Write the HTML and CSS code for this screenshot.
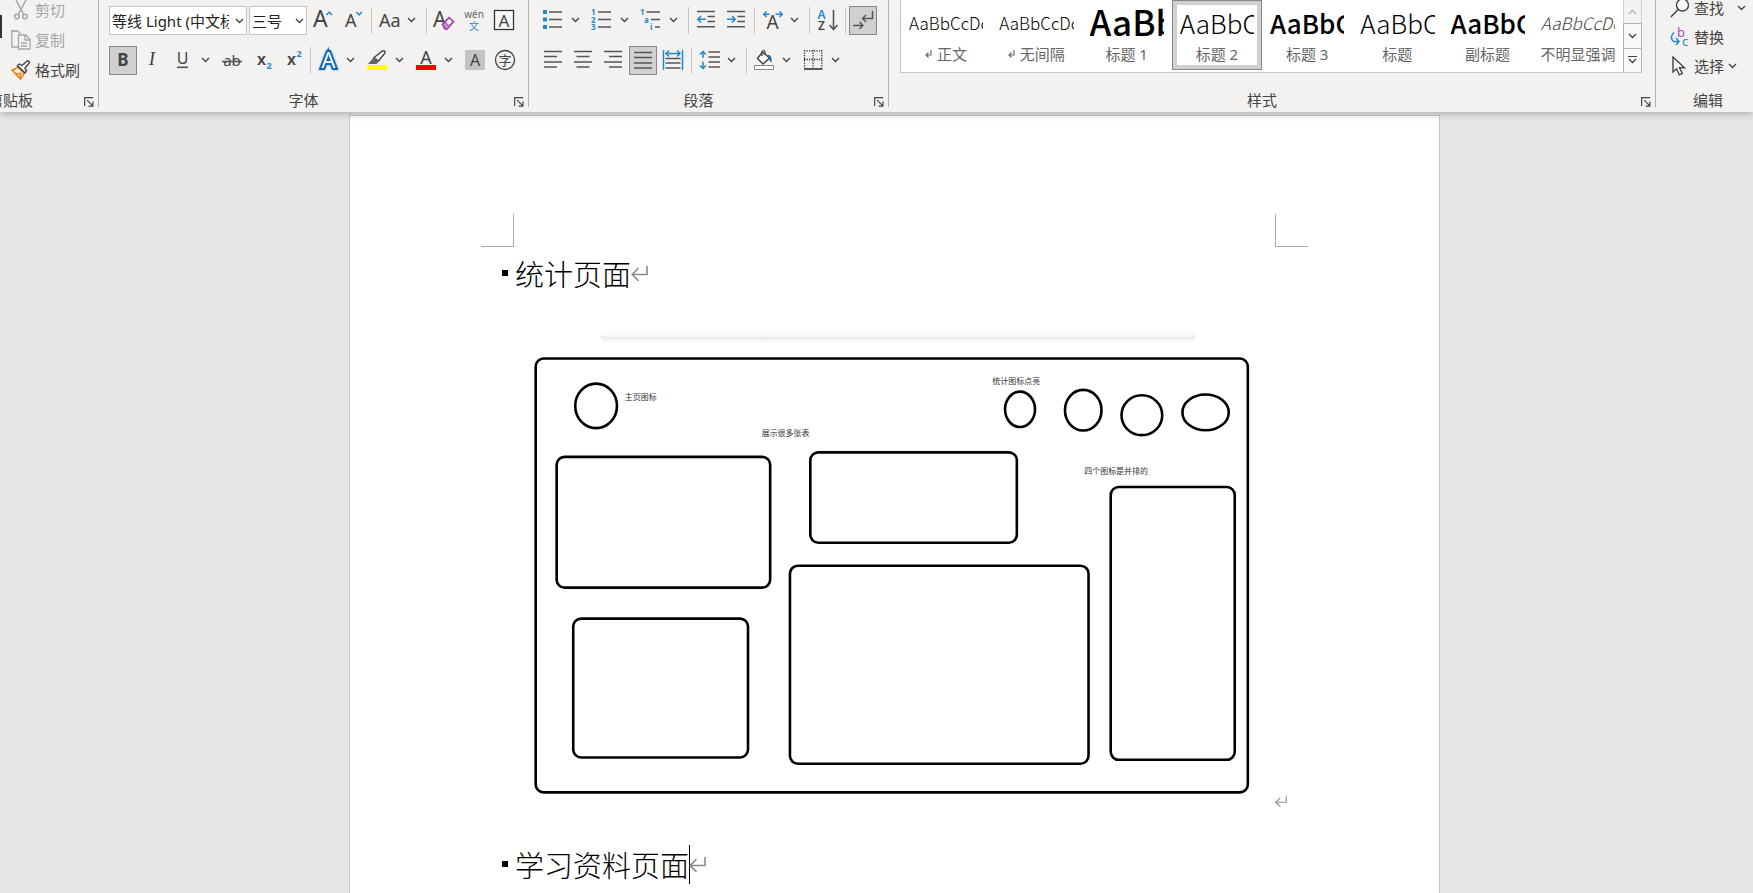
FILE: index.html
```html
<!DOCTYPE html>
<html lang="zh-CN">
<head>
<meta charset="utf-8">
<title>统计页面</title>
<link rel="stylesheet" href="styles.css">
</head>
<body>
<svg class="defs" aria-hidden="true">
  <symbol id="chev" viewBox="0 0 9 6"><path d="M1 1l3.500 3.500L8 1" fill="none" stroke="currentColor" stroke-width="1.400"/></symbol>
  <symbol id="launch" viewBox="0 0 11 11"><path d="M.7 10V.7H10M3.500 3.500l6 6M9.800 5v5H5" fill="none" stroke="#444" stroke-width="1.300"/></symbol>
  <symbol id="ret" viewBox="0 0 17 15"><path d="M16 0v8.500H1.500M7.500 2L1.200 8.500l6.300 6.300" fill="none" stroke="currentColor" stroke-width="1.600"/></symbol>
  <symbol id="mini" viewBox="0 0 7 8"><path d="M6 0v5H1M3.500 2.500L1 5l2.500 2.500" fill="none" stroke="currentColor" stroke-width="1.100"/></symbol>
</svg>

<header class="ribbon">
  <section class="group clipboard">
    <div class="group-body">
      <button class="paste" aria-label="粘贴"></button>
      <div class="commands">
        <button class="command" disabled>
          <svg class="cmd-icon" viewBox="0 0 20 20"><g fill="none" stroke="#a6a6a6" stroke-width="1.500"><path d="M5 0l7.500 14M15 0L7.500 14"/><circle cx="6" cy="16.500" r="2.300"/><circle cx="14" cy="16.500" r="2.300"/></g></svg>剪切</button>
        <button class="command" disabled>
          <svg class="cmd-icon" viewBox="0 0 20 20"><g fill="#f3f2f1" stroke="#a6a6a6" stroke-width="1.300"><path d="M7 1H.8v16H7"/><path d="M.8 1h6l3 3"/><path d="M7.500 5h7l4.500 4.500V19H7.500z"/><path d="M14 5v5h5M10 13h6M10 16h6" fill="none"/></g></svg>复制</button>
        <button class="command">
          <svg class="cmd-icon" viewBox="0 0 20 20"><path d="M1 10q3.500-.5 5.500-3l6.500 6q-.5 3-3.500 6z" fill="#fdf3e6" stroke="#e07b10" stroke-width="1.500"/><path d="M4.500 13.500l6-.5-1.500 5z" fill="#f3b467" stroke="#e07b10"/><path d="M6.500 5.500l2-1.500 2.500 1.500L16.500.8q2 .2 2 2L13.800 8.500l1.700 2-1.500 2.500z" fill="#fafafa" stroke="#444" stroke-width="1.400"/></svg>格式刷</button>
      </div>
    </div>
    <div class="group-foot"><span>剪贴板</span><button class="launcher" aria-label="剪贴板选项"><svg><use href="#launch"/></svg></button></div>
  </section>

  <section class="group font">
    <div class="group-body">
      <div class="row">
        <div class="combo combo-font"><select aria-label="字体"><option>等线 Light (中文标题)</option></select><svg class="chev"><use href="#chev"/></svg></div>
        <div class="combo combo-size"><select aria-label="字号"><option>三号</option></select><svg class="chev"><use href="#chev"/></svg></div>
        <button class="tool" aria-label="增大字号"><svg viewBox="0 0 30 30"><text x="5" y="22" font-size="23">A</text><path class="blue-line" d="M18.500 10l2.700-3 2.700 3"/></svg></button>
        <button class="tool" aria-label="减小字号"><svg viewBox="0 0 30 30"><text x="7" y="22" font-size="18">A</text><path class="blue-line" d="M18.500 7l2.700 3 2.700-3"/></svg></button>
        <i class="sep"></i>
        <button class="tool split" aria-label="更改大小写"><svg viewBox="0 0 30 30"><text x="5" y="22" font-size="18">Aa</text></svg><span class="drop"><svg class="chev"><use href="#chev"/></svg></span></button>
        <i class="sep"></i>
        <button class="tool" aria-label="清除所有格式"><svg viewBox="0 0 30 30"><text x="4" y="22" font-size="21">A</text><path d="M13.500 19.500l6.500-7 4.500 4-6.500 7.500h-2z" fill="#f3f2f1" stroke="#9a35a8" stroke-width="1.600"/><path d="M16 17l5 4.500-3.200 3-4.500-4.500z" fill="#c48ccc" stroke="#9a35a8"/></svg></button>
        <button class="tool" aria-label="拼音指南"><svg viewBox="0 0 30 30"><text x="15" y="13" font-size="10" text-anchor="middle" class="t-gray">wén</text><text x="15" y="25" font-size="10" text-anchor="middle" class="t-blue">文</text></svg></button>
        <button class="tool" aria-label="字符边框"><svg viewBox="0 0 30 30"><rect x="5.500" y="5.500" width="19" height="19" fill="#fafafa" stroke="#333" stroke-width="1.300"/><text x="15" y="21.500" font-size="17" text-anchor="middle">A</text></svg></button>
      </div>
      <div class="row">
        <button class="tool on" aria-label="加粗" aria-pressed="true"><svg viewBox="0 0 30 30"><text x="15" y="20" font-size="17" font-weight="700" text-anchor="middle">B</text></svg></button>
        <button class="tool" aria-label="倾斜"><svg viewBox="0 0 30 30"><text x="14" y="20" font-size="19" class="t-serif" text-anchor="middle">I</text></svg></button>
        <button class="tool split" aria-label="下划线"><svg viewBox="0 0 30 30"><text x="14.500" y="19" font-size="16" text-anchor="middle">U</text><path class="line" d="M9 22.300h11"/></svg><span class="drop"><svg class="chev"><use href="#chev"/></svg></span></button>
        <button class="tool" aria-label="删除线"><svg viewBox="0 0 30 30"><text x="15" y="20.500" font-size="15" text-anchor="middle">ab</text><path class="line" d="M5 16.500h20"/></svg></button>
        <button class="tool" aria-label="下标"><svg viewBox="0 0 30 30"><text x="10" y="19.500" font-size="16" font-weight="600">x</text><text x="19.500" y="24" font-size="9" font-weight="700" class="t-blue">2</text></svg></button>
        <button class="tool" aria-label="上标"><svg viewBox="0 0 30 30"><text x="10" y="19.500" font-size="16" font-weight="600">x</text><text x="19.500" y="11.500" font-size="9" font-weight="700" class="t-blue">2</text></svg></button>
        <i class="sep"></i>
        <button class="tool split" aria-label="文本效果"><svg viewBox="0 0 30 30"><text class="fx" x="15.500" y="22.500" font-size="22" text-anchor="middle">A</text></svg><span class="drop"><svg class="chev"><use href="#chev"/></svg></span></button>
        <button class="tool split" aria-label="突出显示颜色"><svg viewBox="0 0 30 30"><path d="M12 12.500l8.500-6.500q3-1 2.500 2L16.500 16z" fill="#fafafa" stroke="#444" stroke-width="1.400"/><path d="M12 12l5 4.500-2.500 2.500L6 19z" fill="#666"/><path d="M5 20h20v5H5z" fill="#ff0"/></svg><span class="drop"><svg class="chev"><use href="#chev"/></svg></span></button>
        <button class="tool split" aria-label="字体颜色"><svg viewBox="0 0 30 30"><text x="15" y="18.500" font-size="18" text-anchor="middle">A</text><path d="M5 20h20v5H5z" fill="red"/></svg><span class="drop"><svg class="chev"><use href="#chev"/></svg></span></button>
        <button class="tool" aria-label="字符底纹"><svg viewBox="0 0 30 30"><path d="M5 5h20v20H5z" fill="#c5c3c1"/><text x="15" y="21" font-size="16" text-anchor="middle">A</text></svg></button>
        <button class="tool" aria-label="带圈字符"><svg viewBox="0 0 30 30"><circle cx="15" cy="15" r="9.500" fill="none" stroke="#444" stroke-width="1.300"/><text x="15" y="20" font-size="13" text-anchor="middle">字</text></svg></button>
      </div>
    </div>
    <div class="group-foot"><span>字体</span><button class="launcher" aria-label="字体选项"><svg><use href="#launch"/></svg></button></div>
  </section>

  <section class="group paragraph">
    <div class="group-body">
      <div class="row">
        <button class="tool split" aria-label="项目符号"><svg viewBox="0 0 30 30"><path d="M5 5h4v4H5zM5 12.500h4v4H5zM5 20h4v4H5z" fill="#1e88d2"/><path class="line" d="M11 7h13M11 14.500h13M11 22h13"/></svg><span class="drop"><svg class="chev"><use href="#chev"/></svg></span></button>
        <button class="tool split" aria-label="编号"><svg viewBox="0 0 30 30"><g font-size="8" font-weight="700"><text class="t-blue" x="4" y="10">1</text><text class="t-blue" x="4" y="17.500">2</text><text class="t-blue" x="4" y="25">3</text></g><path class="line" d="M11 7h13M11 14.500h13M11 22h13"/></svg><span class="drop"><svg class="chev"><use href="#chev"/></svg></span></button>
        <button class="tool split" aria-label="多级列表"><svg viewBox="0 0 30 30"><g font-size="8" font-weight="700"><text class="t-blue" x="4" y="10">1</text><text class="t-blue" x="8" y="17.500">a</text><text class="t-blue" x="14" y="25">i</text></g><path class="line" d="M10.500 7H24M15 14.500h9M19 22h5"/></svg><span class="drop"><svg class="chev"><use href="#chev"/></svg></span></button>
        <i class="sep"></i>
        <button class="tool" aria-label="减少缩进量"><svg viewBox="0 0 30 30"><path class="line" d="M6 6.500h18M16.500 11.500H24M16.500 16.500H24M6 21.800h18"/><path class="blue-line" d="M15 14.200H7M10 11l-3.200 3.200L10 17.400"/></svg></button>
        <button class="tool" aria-label="增加缩进量"><svg viewBox="0 0 30 30"><path class="line" d="M6 6.500h18M16.500 11.500H24M16.500 16.500H24M6 21.800h18"/><path class="blue-line" d="M6 14.200h8M11 11l3.200 3.200-3.200 3.200"/></svg></button>
        <i class="sep"></i>
        <button class="tool split" aria-label="中文版式"><svg viewBox="0 0 30 30"><text x="15.500" y="24" font-size="19" text-anchor="middle">A</text><path class="blue-line" d="M12.500 9.200H7M9.500 6.500L6.800 9.200l2.700 2.700M18.500 9.200H25M22.500 6.500l2.700 2.700-2.700 2.700"/></svg><span class="drop"><svg class="chev"><use href="#chev"/></svg></span></button>
        <i class="sep"></i>
        <button class="tool" aria-label="排序"><svg viewBox="0 0 30 30"><g font-size="12" font-weight="600"><text class="t-blue" x="5.500" y="13.500">A</text><text x="6" y="25">Z</text></g><path class="line" d="M21.500 5v19M17.500 20l4 4.500 4-4.500"/></svg></button>
        <i class="sep"></i>
        <button class="tool on" aria-label="显示编辑标记" aria-pressed="true"><svg viewBox="0 0 30 30"><path class="line thin" d="M24.500 5v7.500h-10M18 9l-3.500 3.500L18 16M5 19.500h10M11.500 16l3.500 3.500-3.500 3.500"/></svg></button>
      </div>
      <div class="row">
        <button class="tool" aria-label="左对齐"><svg viewBox="0 0 30 30"><path class="line" d="M6 6.500h18M6 11.500h13M6 17h18M6 22h13"/></svg></button>
        <button class="tool" aria-label="居中"><svg viewBox="0 0 30 30"><path class="line" d="M6 6.500h18M8.500 11.500h13M6 17h18M8.500 22h13"/></svg></button>
        <button class="tool" aria-label="右对齐"><svg viewBox="0 0 30 30"><path class="line" d="M6 6.500h18M11 11.500h13M6 17h18M11 22h13"/></svg></button>
        <button class="tool on" aria-label="两端对齐" aria-pressed="true"><svg viewBox="0 0 30 30"><path class="line" d="M6 6.500h18M6 11.500h18M6 17h18M6 22h18"/></svg></button>
        <button class="tool" aria-label="分散对齐"><svg viewBox="0 0 30 30"><path class="line" d="M7.500 13.500h15M7.500 18h15M7.500 23h15"/><path class="blue-line" d="M5.500 5v20M24.500 5v20M8 8.500h14M11 5.500l-3 3 3 3M19 5.500l3 3-3 3"/></svg></button>
        <i class="sep"></i>
        <button class="tool split" aria-label="行和段落间距"><svg viewBox="0 0 30 30"><path class="line" d="M14.500 7H26M14.500 12H26M14.500 17H26M14.500 22H26"/><path class="blue-line" d="M9 7v6M9 16.500v6M6 9.500l3-3 3 3M6 20.500l3 3 3-3"/></svg><span class="drop"><svg class="chev"><use href="#chev"/></svg></span></button>
        <i class="sep"></i>
        <button class="tool split" aria-label="底纹"><svg viewBox="0 0 30 30"><path d="M13.500 7l7 6-6.500 6L8.500 13.500z" fill="#fafafa" stroke="#444" stroke-width="1.500"/><path d="M13 11V6.500q1.500-2.500 3 0V10" fill="none" stroke="#444" stroke-width="1.200"/><path d="M18.500 9.500q5 .5 4 8-2-1-2.500-4z" fill="#1b65a8"/><path d="M5.500 20.500h19v4h-19z" fill="#fff" stroke="#8a8886"/></svg><span class="drop"><svg class="chev"><use href="#chev"/></svg></span></button>
        <button class="tool split" aria-label="边框"><svg viewBox="0 0 30 30"><path d="M6 5.800h18M6 14.500h18M6.500 5v18M15 5v18M23.800 5v18" fill="none" stroke="#333" stroke-width="1.300" stroke-dasharray="1.300 1.200"/><path d="M6 24h18.500" stroke="#333" stroke-width="1.600"/></svg><span class="drop"><svg class="chev"><use href="#chev"/></svg></span></button>
      </div>
    </div>
    <div class="group-foot"><span>段落</span><button class="launcher" aria-label="段落选项"><svg><use href="#launch"/></svg></button></div>
  </section>

  <section class="group styles">
    <div class="group-body">
      <div class="gallery">
        <button class="style"><span class="sample s-body">AaBbCcDc</span><span class="style-name"><svg class="mini-ret"><use href="#mini"/></svg>正文</span></button>
        <button class="style"><span class="sample s-body">AaBbCcDc</span><span class="style-name"><svg class="mini-ret"><use href="#mini"/></svg>无间隔</span></button>
        <button class="style"><span class="sample s-h1">AaBb</span><span class="style-name">标题 1</span></button>
        <button class="style chosen" aria-pressed="true"><span class="sample s-title">AaBbC</span><span class="style-name">标题 2</span></button>
        <button class="style"><span class="sample s-title s-bold">AaBbC</span><span class="style-name">标题 3</span></button>
        <button class="style"><span class="sample s-title">AaBbC</span><span class="style-name">标题</span></button>
        <button class="style"><span class="sample s-title s-bold">AaBbC</span><span class="style-name">副标题</span></button>
        <button class="style"><span class="sample s-body s-italic">AaBbCcDc</span><span class="style-name">不明显强调</span></button>
        <div class="scroller">
          <button disabled aria-label="上一行"><svg class="chev up"><use href="#chev"/></svg></button>
          <button aria-label="下一行"><svg class="chev"><use href="#chev"/></svg></button>
          <button class="more" aria-label="其他"><svg class="chev"><use href="#chev"/></svg></button>
        </div>
      </div>
    </div>
    <div class="group-foot"><span>样式</span><button class="launcher" aria-label="样式选项"><svg><use href="#launch"/></svg></button></div>
  </section>

  <section class="group editing">
    <div class="group-body">
      <div class="commands">
        <button class="command"><svg class="cmd-icon" viewBox="0 0 20 20"><circle cx="12.500" cy="7" r="6" fill="#fafafa" stroke="#444" stroke-width="1.400"/><path d="M8.300 11.500L.8 19" stroke="#444" stroke-width="1.500"/></svg><span>查找</span><svg class="chev far"><use href="#chev"/></svg></button>
        <button class="command"><svg class="cmd-icon" viewBox="0 0 20 20"><g font-size="13"><text x="7" y="10" class="t-purple">b</text><text x="12" y="19" class="t-blue">c</text></g><path class="blue-line" d="M4 5.500Q-1 10 3.500 14.500h5M6 11l3 3.500-3 3.500"/></svg><span>替换</span></button>
        <button class="command"><svg class="cmd-icon" viewBox="0 0 20 20"><path d="M3 1v15l3.500-3.200 2.800 6 3-1.400-2.800-5.700h5z" fill="#fafafa" stroke="#444" stroke-width="1.400"/></svg><span>选择</span><svg class="chev"><use href="#chev"/></svg></button>
      </div>
    </div>
    <div class="group-foot"><span>编辑</span></div>
  </section>
</header>

<main class="canvas">
  <article class="page">
    <div class="crops"><i class="crop left"></i><i class="crop right"></i></div>
    <div class="text-area">
      <h2>统计页面<svg class="ret"><use href="#ret"/></svg></h2>
      <figure>
        <svg class="drawing" viewBox="0 0 762 478" role="img" aria-label="统计页面">
          <defs><linearGradient id="fade" x1="0" y1="0" x2="0" y2="1"><stop offset="0" stop-color="#e4e4e4"/><stop offset="1" stop-color="#fff"/></linearGradient></defs>
          <path d="M86 6h597q-3 7-9 7H95q-6 0-9-7z" fill="url(#fade)"/>
          <path d="M86 3h598q-2 4-7 4H93q-5 0-7-4z" fill="#f8f8f8"/>
          <g fill="none" stroke="#000" stroke-width="2.600">
            <rect x="21.700" y="28.500" width="713.100" height="434.500" rx="8"/>
            <rect x="42.700" y="127" width="213.800" height="131" rx="8"/>
            <rect x="296.700" y="122.500" width="206.800" height="90.500" rx="8"/>
            <rect x="59.300" y="289" width="175" height="139" rx="8"/>
            <rect x="276.300" y="236" width="299" height="198.300" rx="8"/>
            <rect x="597.500" y="157.200" width="124.200" height="273.200" rx="8"/>
            <ellipse cx="82.200" cy="76" rx="20.900" ry="22.300"/>
            <ellipse cx="506.700" cy="79.400" rx="15" ry="17.700"/>
            <ellipse cx="570" cy="80.300" rx="18.300" ry="20.300"/>
            <ellipse cx="628.700" cy="85.300" rx="20.400" ry="20"/>
            <ellipse cx="692.500" cy="82.500" rx="23.200" ry="17.900"/>
          </g>
          <g class="notes">
            <text x="111" y="70">主页图标</text>
            <text x="479" y="54">统计图标点亮</text>
            <text x="248" y="106">展示很多张表</text>
            <text x="571" y="144">四个图标是并排的</text>
          </g>
        </svg>
        <svg class="ret small"><use href="#ret"/></svg>
      </figure>
      <h2>学习资料页面<i class="caret"></i><svg class="ret"><use href="#ret"/></svg></h2>
    </div>
  </article>
</main>
</body>
</html>
```
FILE: styles.css
```css
* { box-sizing: border-box; }

body {
  margin: 0;
  height: 100vh;
  display: flex;
  flex-direction: column;
  overflow: hidden;
  background: #e6e6e6;
  color: #444;
  font: 15px/20px "Noto Sans", "Noto Sans CJK SC", sans-serif;
}

button {
  border: 0;
  padding: 0;
  background: none;
  color: inherit;
  font: inherit;
}

svg { display: block; flex: none; }
.defs { position: absolute; width: 0; height: 0; }

/* Ribbon */
.ribbon {
  position: relative;
  z-index: 1;
  display: flex;
  flex: none;
  height: 112px;
  padding-bottom: 5px;
  background: #f3f2f1;
  box-shadow: 0 1px 8px rgba(0, 0, 0, 0.3);
}

.group {
  display: flex;
  flex-direction: column;
  flex: none;
  border-right: 1px solid #b3b0ad;
}

.group-body {
  flex: 1;
  display: flex;
  flex-direction: column;
  gap: 10px;
  min-height: 0;
  padding: 5px 0 0 9px;
}

.group-foot {
  display: flex;
  align-items: flex-end;
  height: 18px;
  line-height: 14px;
}
.group-foot span { flex: 1; text-align: center; }
.launcher { width: 20px; padding-left: 6px; }
.launcher svg { width: 10px; height: 10px; }

.clipboard { width: 156px; margin-left: -57px; }
.clipboard .group-body { flex-direction: row; padding: 0; gap: 9px; }
.paste {
  width: 59px;
  height: 23px;
  margin-top: 15px;
  border-right: 2px solid #333;
}
.font { width: 430px; }
.paragraph { width: 360px; }
.styles { flex: 1; min-width: 0; }
.editing { width: 97px; border-right: 0; }

.commands { display: flex; flex-direction: column; margin-top: -5px; }
.command {
  display: flex;
  align-items: center;
  gap: 4px;
  height: 30px;
  white-space: nowrap;
}
.command:disabled { color: #a6a6a6; }
.cmd-icon { width: 20px; height: 20px; }

.row { display: flex; height: 30px; }
.tool { display: flex; flex: none; height: 30px; }
.tool > svg { width: 30px; height: 30px; }
.split { margin-right: 4px; }
.drop { display: grid; place-items: center; width: 15px; height: 30px; }
.chev { width: 9px; height: 6px; }
.on {
  height: 29px;
  width: 28px;
  margin: 1px;
  justify-content: center;
  align-items: center;
  background: #d2d0ce;
  outline: 1px solid #8a8886;
  outline-offset: -1px;
}
.sep { width: 6px; flex: none; padding: 2px 0 1px; display: flex; justify-content: center; }
.sep::before { content: ""; width: 1px; background: #c8c6c4; }

.row text { fill: #444; }
.row .t-gray { fill: #666; }
.row .t-blue, .commands .t-blue { fill: #1e88d2; }
.t-purple { fill: #b146c2; }
.t-serif { font-family: "Liberation Serif", serif; font-style: italic; }
.line { fill: none; stroke: #555; stroke-width: 1.6; }
.thin { stroke-width: 1.4; }
.blue-line { fill: none; stroke: #1e88d2; stroke-width: 1.5; }
.row .fx {
  fill: #fff;
  stroke: #1668b3;
  stroke-width: 4;
  paint-order: stroke;
  filter: drop-shadow(0 0 1px #6cb2ec);
}

.combo {
  position: relative;
  height: 29px;
  margin: 1px 1px 0;
}
.combo select {
  width: 100%;
  height: 29px;
  padding: 0 17px 0 2px;
  border: 1px solid #c8c6c4;
  border-radius: 0;
  appearance: none;
  background: #fff;
  color: #222;
  font: inherit;
}
.combo .chev { position: absolute; right: 3px; top: 12px; pointer-events: none; }
.combo-font { width: 138px; }
.combo-size { width: 58px; }

/* Style gallery */
.styles .group-body { padding: 0 13px 0 11px; }
.gallery {
  display: flex;
  height: 73px;
  border: 1px solid #c8c6c4;
  border-top: 0;
  border-right: 0;
  background: #fff;
}
.style {
  display: flex;
  flex-direction: column;
  flex: 1;
  min-width: 0;
  height: 70px;
  padding: 0 8px;
  color: #666;
  text-align: center;
}
.chosen { box-shadow: inset 0 0 0 1px #8a8886, inset 0 0 0 5px #d2d0ce; }
.sample {
  height: 44px;
  overflow: hidden;
  color: #000;
  font-family: "Noto Sans CJK SC", sans-serif;
  line-height: 46px;
  text-align: left;
  white-space: nowrap;
}
.s-body { font-size: 17px; font-weight: 300; }
.s-h1 { font-size: 35px; font-weight: 500; line-height: 42px; }
.s-title { font-size: 26px; font-weight: 300; }
.s-bold { font-weight: 500; }
.s-italic { color: #404040; font-style: italic; }
.style-name {
  display: flex;
  justify-content: center;
  align-items: center;
  gap: 5px;
  white-space: nowrap;
}
.mini-ret { width: 7px; height: 8px; }

.scroller { display: flex; flex-direction: column; width: 19px; flex: none; }
.scroller button {
  flex: 1;
  display: flex;
  flex-direction: column;
  justify-content: center;
  align-items: center;
  gap: 1px;
  border: 1px solid #b3b0ad;
  border-bottom: 0;
  background: #f8f8f8;
}
.scroller button:disabled { color: #b3b0ad; background: #f3f2f1; border-color: #d2d0ce; border-top: 0; }
.up { transform: rotate(180deg); }
.more::before { content: ""; width: 9px; height: 1px; background: #444; }

.editing .group-body { padding: 0 0 0 14px; }
.editing .commands { margin-top: -7px; }
.editing .command { height: 29px; }
.editing .far { margin-left: 9px; }
.editing .group-foot { padding-left: 7px; }

/* Document */
.canvas {
  flex: 1;
  display: flex;
  justify-content: center;
  min-height: 0;
  padding: 3px 0 0 36px;
}
.page {
  flex: 0 1 1091px;
  padding: 98px 131px 0;
  border: 1px solid #c6c6c6;
  border-bottom: 0;
  background: #fff;
}
.crops { display: flex; justify-content: space-between; }
.crop { width: 33px; height: 33px; border-bottom: 1px solid #aaa; }
.left { border-right: 1px solid #aaa; }
.right { border-left: 1px solid #aaa; }
.text-area { padding: 0 33px; }

h2 {
  display: flex;
  align-items: center;
  margin: 6px 0 0 -12px;
  color: #000;
  font: 300 29px/40px "Noto Sans CJK SC", sans-serif;
}
h2::before { content: ""; width: 6px; height: 6px; margin-right: 7px; background: #000; }
.ret { width: 17px; height: 15px; color: #8a8a8a; }
.caret { width: 1px; height: 39px; margin-right: -1px; background: #000; }

figure { display: flex; align-items: flex-end; margin: 37px -12px 37px 0; }
figure + h2 { margin-top: 0; }
.drawing { flex: 1; min-width: 0; }
.small { width: 12px; height: 11px; }
.notes { font: 8px "Noto Sans CJK SC", sans-serif; fill: #333; }
```
